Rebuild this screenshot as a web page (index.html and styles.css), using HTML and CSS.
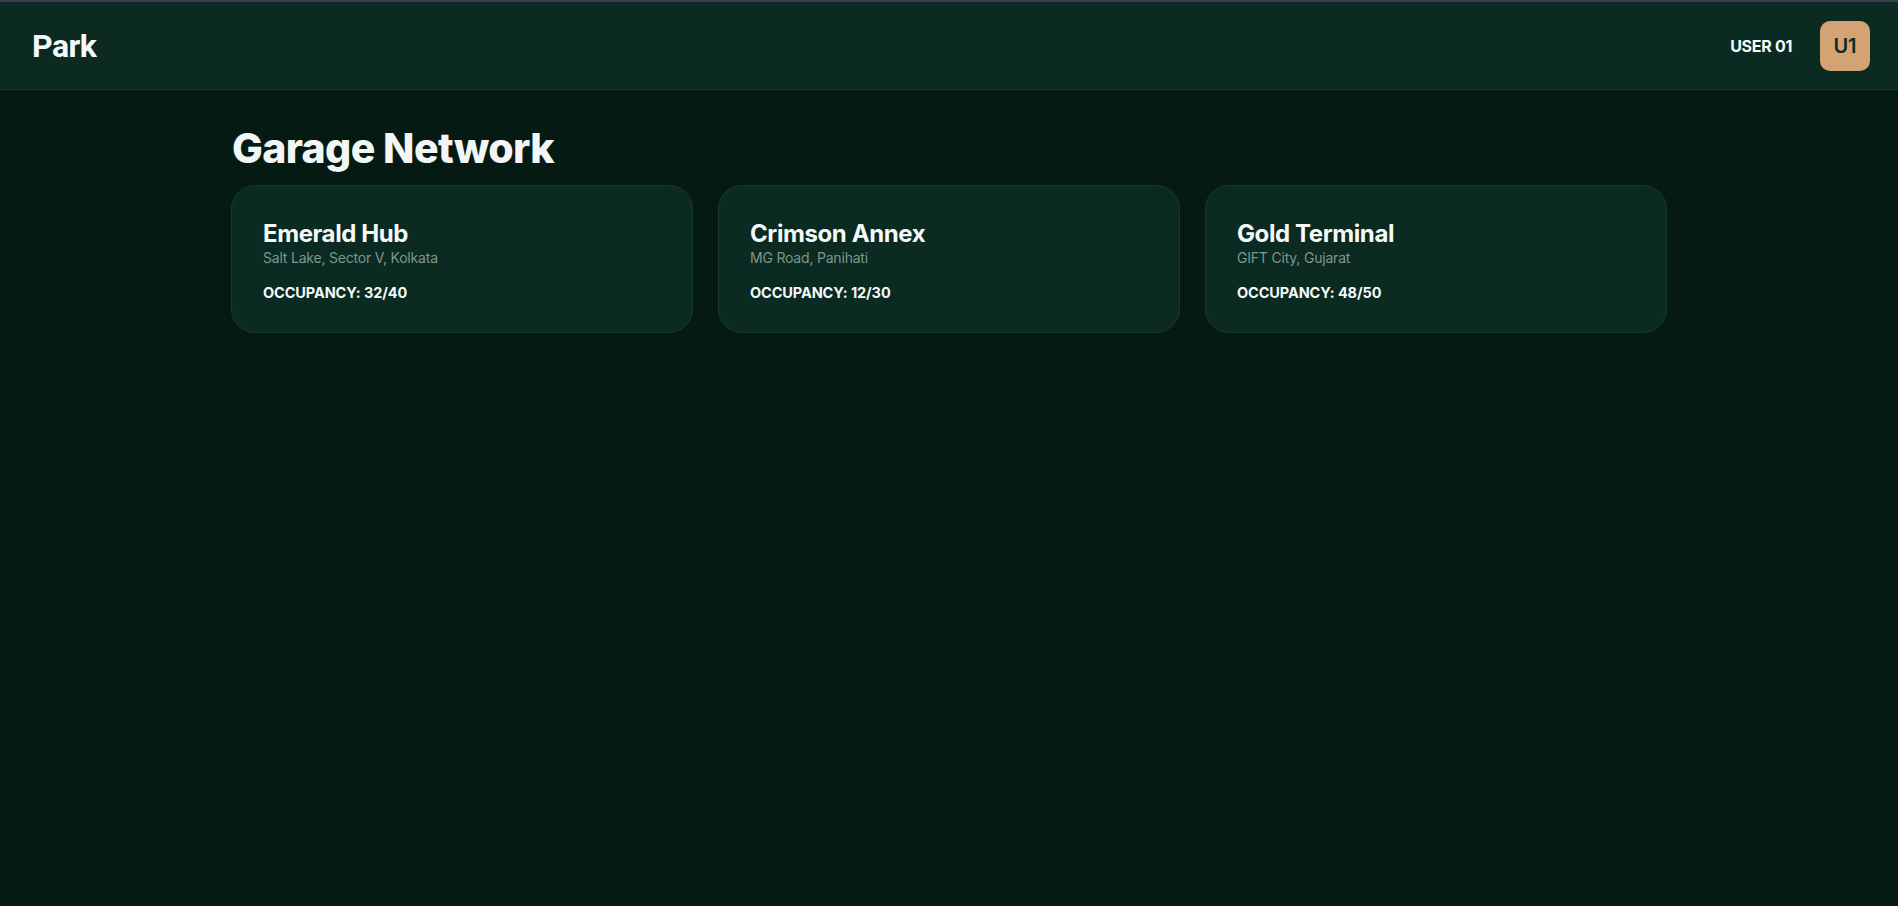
FILE: index.html
```html
<!DOCTYPE html>
<html lang="en">
<head>
<meta charset="utf-8">
<title>Park</title>
<link rel="stylesheet" href="styles.css">
</head>
<body>
<div class="topline"></div>
<header class="header">
  <div class="brand">Park</div>
  <div class="user">
    <span class="user-name">USER 01</span>
    <div class="avatar">U1</div>
  </div>
</header>
<main class="main">
  <h1 class="page-title">Garage Network</h1>
  <div class="grid">
    <div class="card">
      <h2 class="card-title">Emerald Hub</h2>
      <div class="card-sub">Salt Lake, Sector V, Kolkata</div>
      <div class="card-occ">OCCUPANCY: 32/40</div>
    </div>
    <div class="card">
      <h2 class="card-title">Crimson Annex</h2>
      <div class="card-sub">MG Road, Panihati</div>
      <div class="card-occ">OCCUPANCY: 12/30</div>
    </div>
    <div class="card">
      <h2 class="card-title">Gold Terminal</h2>
      <div class="card-sub">GIFT City, Gujarat</div>
      <div class="card-occ">OCCUPANCY: 48/50</div>
    </div>
  </div>
</main>
</body>
</html>
```
FILE: styles.css
```css
* { box-sizing: border-box; }
html, body {
  margin: 0;
  padding: 0;
  background: #061a14;
  color: #f2f7f5;
  font-family: "Plus Jakarta Sans", Inter, "Noto Sans", sans-serif;
  min-height: 100vh;
}
.topline {
  height: 2px;
  background: #3b3f51;
}
.header {
  height: 88px;
  background: #0b2a21;
  border-bottom: 1px solid #16382d;
  display: flex;
  align-items: center;
  justify-content: space-between;
  padding: 0 28px 0 32px;
}
.brand {
  font-family: Roboto, Inter, sans-serif;
  font-weight: 700;
  font-size: 32px;
  letter-spacing: -0.5px;
  color: #f4faf8;
}
.user {
  display: flex;
  align-items: center;
  gap: 28px;
}
.user-name {
  font-family: Inter, sans-serif;
  font-weight: 700;
  font-size: 16px;
  letter-spacing: -0.3px;
  color: #f4faf8;
}
.avatar {
  width: 50px;
  height: 50px;
  border-radius: 10px;
  background: #d4a373;
  color: #0b2a21;
  display: flex;
  align-items: center;
  justify-content: center;
  font-family: Inter, sans-serif;
  font-weight: 600;
  font-size: 20px;
}
.main {
  max-width: 1436px;
  margin: 0 auto;
  padding-top: 30px;
}
.page-title {
  margin: 0 0 9px 1px;
  font-family: Inter, sans-serif;
  font-weight: 800;
  font-size: 41px;
  line-height: 56px;
  letter-spacing: -0.6px;
  color: #f2f7f5;
}
.grid {
  display: grid;
  grid-template-columns: repeat(3, 1fr);
  gap: 25px;
}
.card {
  height: 148px;
  background: #0b2a21;
  border: 1px solid #17392e;
  border-radius: 24px;
  padding: 34px 31px;
}
.card-title {
  margin: 0;
  font-family: Inter, sans-serif;
  font-weight: 700;
  font-size: 24px;
  line-height: 28px;
  letter-spacing: -0.4px;
  color: #f4faf8;
}
.card-sub {
  margin-top: 1px;
  font-family: Inter, sans-serif;
  font-size: 14px;
  line-height: 17px;
  letter-spacing: -0.2px;
  color: #7d978c;
}
.card-occ {
  margin-top: 18px;
  font-family: Inter, sans-serif;
  font-weight: 700;
  font-size: 14.5px;
  line-height: 18px;
  letter-spacing: -0.1px;
  color: #f4faf8;
}
```
